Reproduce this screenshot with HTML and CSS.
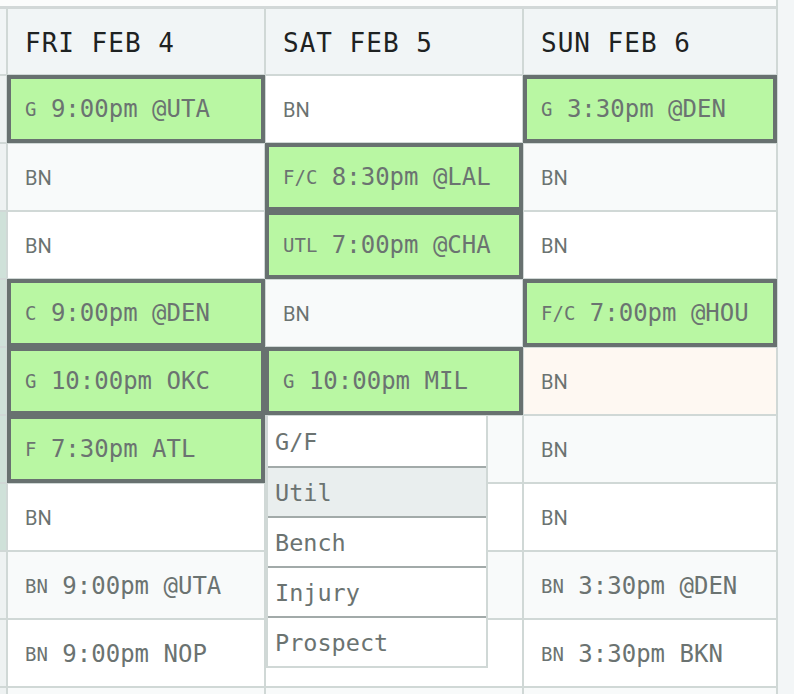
FILE: index.html
```html
<!DOCTYPE html>
<html>
<head>
<meta charset="utf-8">
<link rel="stylesheet" href="styles.css">
</head>
<body>
<div class="sheet">
  <div class="topstrip"></div>
  <div class="grid">
    <div class="edge head"></div>
    <div class="hcell">FRI FEB 4</div>
    <div class="hcell">SAT FEB 5</div>
    <div class="hcell">SUN FEB 6</div>

    <div class="edge"></div>
    <div class="cell sel"><span class="pos">G</span> 9:00pm @UTA</div>
    <div class="cell"><span class="bn">BN</span></div>
    <div class="cell sel"><span class="pos">G</span> 3:30pm @DEN</div>

    <div class="edge"></div>
    <div class="cell alt"><span class="bn">BN</span></div>
    <div class="cell sel"><span class="pos">F/C</span> 8:30pm @LAL</div>
    <div class="cell alt"><span class="bn">BN</span></div>

    <div class="edge green"></div>
    <div class="cell"><span class="bn">BN</span></div>
    <div class="cell sel"><span class="pos">UTL</span> 7:00pm @CHA</div>
    <div class="cell"><span class="bn">BN</span></div>

    <div class="edge green"></div>
    <div class="cell sel"><span class="pos">C</span> 9:00pm @DEN</div>
    <div class="cell alt"><span class="bn">BN</span></div>
    <div class="cell sel"><span class="pos">F/C</span> 7:00pm @HOU</div>

    <div class="edge green"></div>
    <div class="cell sel"><span class="pos">G</span> 10:00pm OKC</div>
    <div class="cell sel"><span class="pos">G</span> 10:00pm MIL</div>
    <div class="cell peach"><span class="bn">BN</span></div>

    <div class="edge green"></div>
    <div class="cell sel"><span class="pos">F</span> 7:30pm ATL</div>
    <div class="cell alt"></div>
    <div class="cell alt"><span class="bn">BN</span></div>

    <div class="edge green"></div>
    <div class="cell"><span class="bn">BN</span></div>
    <div class="cell"></div>
    <div class="cell"><span class="bn">BN</span></div>

    <div class="edge light"></div>
    <div class="cell alt"><span class="pos">BN</span> 9:00pm @UTA</div>
    <div class="cell alt"></div>
    <div class="cell alt"><span class="pos">BN</span> 3:30pm @DEN</div>

    <div class="edge"></div>
    <div class="cell"><span class="pos">BN</span> 9:00pm NOP</div>
    <div class="cell"></div>
    <div class="cell"><span class="pos">BN</span> 3:30pm BKN</div>

    <div class="edge"></div>
    <div class="cell alt"></div>
    <div class="cell alt"></div>
    <div class="cell alt"></div>
  </div>

  <ul class="menu">
    <li class="item">G/F</li>
    <li class="item active">Util</li>
    <li class="item">Bench</li>
    <li class="item">Injury</li>
    <li class="item">Prospect</li>
  </ul>
</div>
</body>
</html>
```
FILE: styles.css
```css
html, body {
  margin: 0;
  padding: 0;
}
body {
  background: #f3f6f7;
  width: 794px;
  height: 694px;
  overflow: hidden;
  font-family: "DejaVu Sans Mono", monospace;
}
.sheet {
  position: relative;
  width: 776px;
  border-right: 2px solid #d0d8d6;
}
.topstrip {
  height: 6px;
  background: #fbfcfc;
}
.grid {
  display: grid;
  grid-template-columns: 6px 256px 256px 252px;
  grid-template-rows: 65px repeat(9, 66px) 6px;
  gap: 2px;
  background: #d0d8d6;
  border-top: 3px solid #d2d8d8;
}
.edge {
  background: #eef2f2;
}
.edge.head {
  background: #f1f5f6;
}
.edge.green {
  background: #cfe1d9;
}
.edge.light {
  background: #eef2f2;
}
.hcell {
  background: #f1f5f6;
  color: #1e2222;
  font-size: 26px;
  letter-spacing: 1px;
  display: flex;
  align-items: center;
  padding-left: 17px;
  padding-top: 2px;
}
.cell {
  background: #ffffff;
  color: #6b7371;
  font-size: 24px;
  display: flex;
  align-items: center;
  padding-left: 17px;
  padding-top: 2px;
  white-space: pre;
}
.cell.alt {
  background: #f8fafa;
}
.cell.peach {
  background: #fef8f2;
}
.cell.sel {
  background: #b9f7a3;
  border: 3px solid #687170;
  box-shadow: 0 0 0 1px #687170;
  padding-left: 14px;
  padding-top: 0;
  position: relative;
}
.pos {
  font-size: 19px;
}
.bn {
  font-family: Roboto, "Noto Sans", sans-serif;
  font-size: 20px;
}
.menu {
  position: absolute;
  left: 266px;
  top: 416px;
  width: 218px;
  margin: 0;
  padding: 0;
  list-style: none;
  background: #fff;
  border: 2px solid #d0d8d6;
  border-top: 0;
}
.item {
  height: 48px;
  display: flex;
  align-items: center;
  padding-left: 7px;
  padding-top: 2px;
  box-sizing: border-box;
  height: 50px;
  font-size: 23.5px;
  color: #6b7371;
  border-top: 2px solid #a2aaa9;
}
.item:first-child {
  border-top: 0;
}
.item.active {
  background: #e9eeee;
}
```
